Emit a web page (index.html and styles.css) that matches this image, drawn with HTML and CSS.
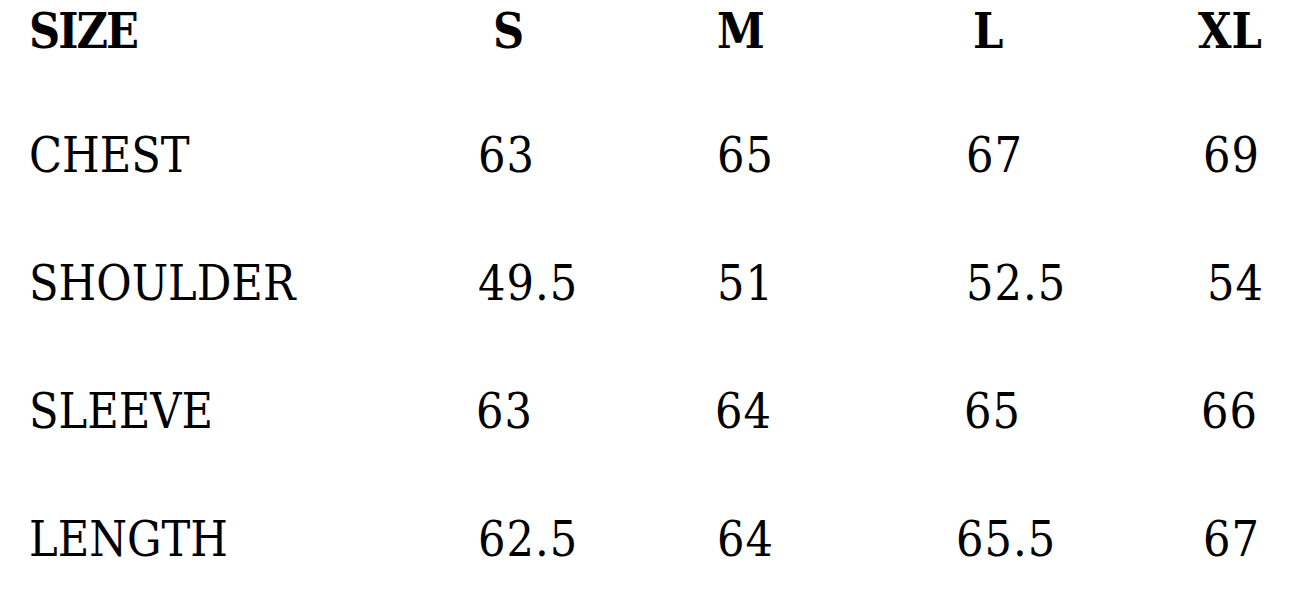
FILE: index.html
```html
<!DOCTYPE html>
<html lang="en">
<head>
<meta charset="utf-8">
<title>Size chart</title>
<link rel="stylesheet" href="styles.css">
</head>
<body>
<div class="chart">
  <div class="row head">
    <div class="cell label">SIZE</div>
    <div class="cell n-s">S</div>
    <div class="cell">M</div>
    <div class="cell n-l">L</div>
    <div class="cell n-xl">XL</div>
  </div>
  <div class="row">
    <div class="cell label">CHEST</div>
    <div class="cell">63</div>
    <div class="cell">65</div>
    <div class="cell">67</div>
    <div class="cell">69</div>
  </div>
  <div class="row">
    <div class="cell label">SHOULDER</div>
    <div class="cell">49.5</div>
    <div class="cell">51</div>
    <div class="cell">52.5</div>
    <div class="cell n-54">54</div>
  </div>
  <div class="row shift">
    <div class="cell label">SLEEVE</div>
    <div class="cell">63</div>
    <div class="cell">64</div>
    <div class="cell">65</div>
    <div class="cell">66</div>
  </div>
  <div class="row">
    <div class="cell label">LENGTH</div>
    <div class="cell">62.5</div>
    <div class="cell">64</div>
    <div class="cell n-655">65.5</div>
    <div class="cell">67</div>
  </div>
</div>
</body>
</html>
```
FILE: styles.css
```css
html, body {
  margin: 0;
  padding: 0;
  background: #ffffff;
}

.chart {
  padding: 3px 0 0 29px;
  font-family: "DejaVu Serif Condensed", "DejaVu Serif", serif;
  font-size: 48px;
  line-height: 56px;
  color: #000000;
  display: flex;
  flex-direction: column;
  gap: 72px;
}

.row {
  display: grid;
  grid-template-columns: 449px 239px 249px 237px 1fr;
}

.cell {
  white-space: nowrap;
  letter-spacing: 1px;
}

.cell.label {
  letter-spacing: 0;
}

.head {
  font-weight: bold;
  margin-bottom: -4px;
}

.head .cell.label {
  letter-spacing: -2px;
}

.head .cell {
  letter-spacing: 0;
}

.n-s { margin-left: 15px; }
.n-l { margin-left: 7px; }
.n-xl { margin-left: -5px; }
.n-54 { margin-left: 4px; }
.n-655 { margin-left: -10px; }

.shift .cell:not(.label) { margin-left: -2px; }
```
